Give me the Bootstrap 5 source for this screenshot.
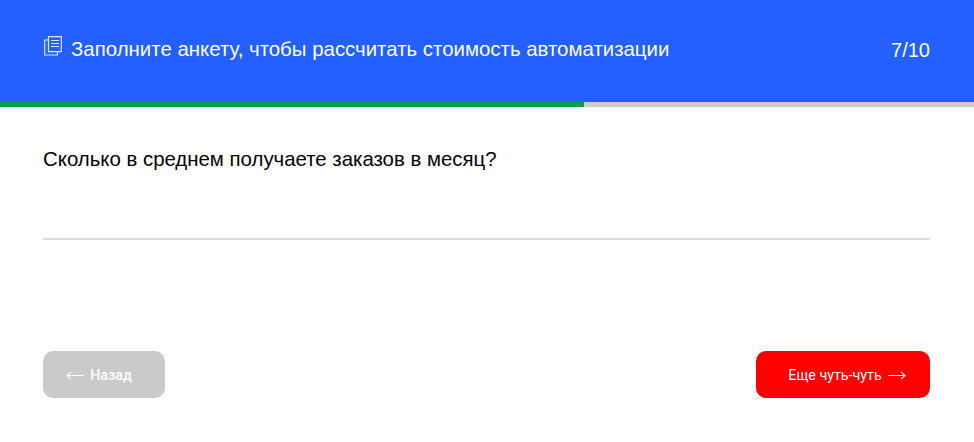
<!DOCTYPE html>
<html lang="ru">
<head>
<meta charset="utf-8">
<title>Анкета</title>
<link href="https://cdn.jsdelivr.net/npm/bootstrap@5.3.0/dist/css/bootstrap.min.css" rel="stylesheet">
<style>
html,body{height:442px;overflow:hidden;background:#fff}
body{font-family:"Liberation Sans",Arial,sans-serif;color:#111}
.quiz-head{height:102px;background:#2360ff;padding:0 44px 3px 43px;color:#fff}
.quiz-title{font-size:20.43px;line-height:1;margin:0;font-weight:400}
.quiz-count{font-size:20px;line-height:1}
.quiz-track{height:5px;background:#cccccc}
.quiz-fill{height:100%;background:#0b9e4a}
.quiz-body{padding:40px 44px 0 43px}
.quiz-q{font-size:20.4px;line-height:24px;margin:0;font-weight:400;color:#000}
.quiz-line{height:2px;background:#dcdcdc;margin-top:67px}
.quiz-foot{padding:111px 44px 0 43px}
.quiz-btn{height:47px;border-radius:10px;border:0;color:#fff;font-family:Roboto,sans-serif;font-size:14.3px;font-weight:500;padding:2px 0 0;gap:6px}
.quiz-btn:disabled{opacity:1;color:#fff;background:#cacaca}
.quiz-prev{width:122px;background:#cacaca;padding-right:10px}
.quiz-next{width:174px;background:#ff0000;font-weight:400;padding-left:8px}
.quiz-next:hover,.quiz-next:active{background:#ff0000!important;color:#fff!important}
.quiz-ico{margin-top:-7px}
</style>
</head>
<body>
<header class="quiz-head d-flex align-items-center justify-content-between">
  <div class="d-flex align-items-center gap-2">
    <svg class="quiz-ico flex-shrink-0" width="20" height="20" viewBox="0 0 20 20" fill="none" stroke="#dbe5ff" stroke-width="1.200">
      <path d="M5.500 .7h12.800v15h-12.800z"/>
      <path d="M5.500 4h-3.800v15h12.800v-3.300"/>
      <path d="M8 4.500h8M8 7.500h8M8 10.500h8"/>
    </svg>
    <h1 class="quiz-title">Заполните анкету, чтобы рассчитать стоимость автоматизации</h1>
  </div>
  <div class="quiz-count">7/10</div>
</header>
<div class="quiz-track"><div class="quiz-fill" style="width:60%"></div></div>
<main class="quiz-body">
  <p class="quiz-q">Сколько в среднем получаете заказов в месяц?</p>
  <div class="quiz-line"></div>
</main>
<footer class="quiz-foot d-flex justify-content-between">
  <button class="btn quiz-btn quiz-prev d-flex align-items-center justify-content-center" disabled>
    <svg width="18" height="9" viewBox="0 0 18 9" fill="none" stroke="#fff" stroke-width="1.100"><path d="M18 4.500H1M5 1 1 4.500 5 8"/></svg>
    <span>Назад</span>
  </button>
  <button class="btn quiz-btn quiz-next d-flex align-items-center justify-content-center">
    <span>Еще чуть-чуть</span>
    <svg width="18" height="9" viewBox="0 0 18 9" fill="none" stroke="#fff" stroke-width="1.100"><path d="M0 4.500h17M13 1l4 3.500L13 8"/></svg>
  </button>
</footer>
<script src="https://cdn.jsdelivr.net/npm/bootstrap@5.3.0/dist/js/bootstrap.bundle.min.js"></script>
</body>
</html>
